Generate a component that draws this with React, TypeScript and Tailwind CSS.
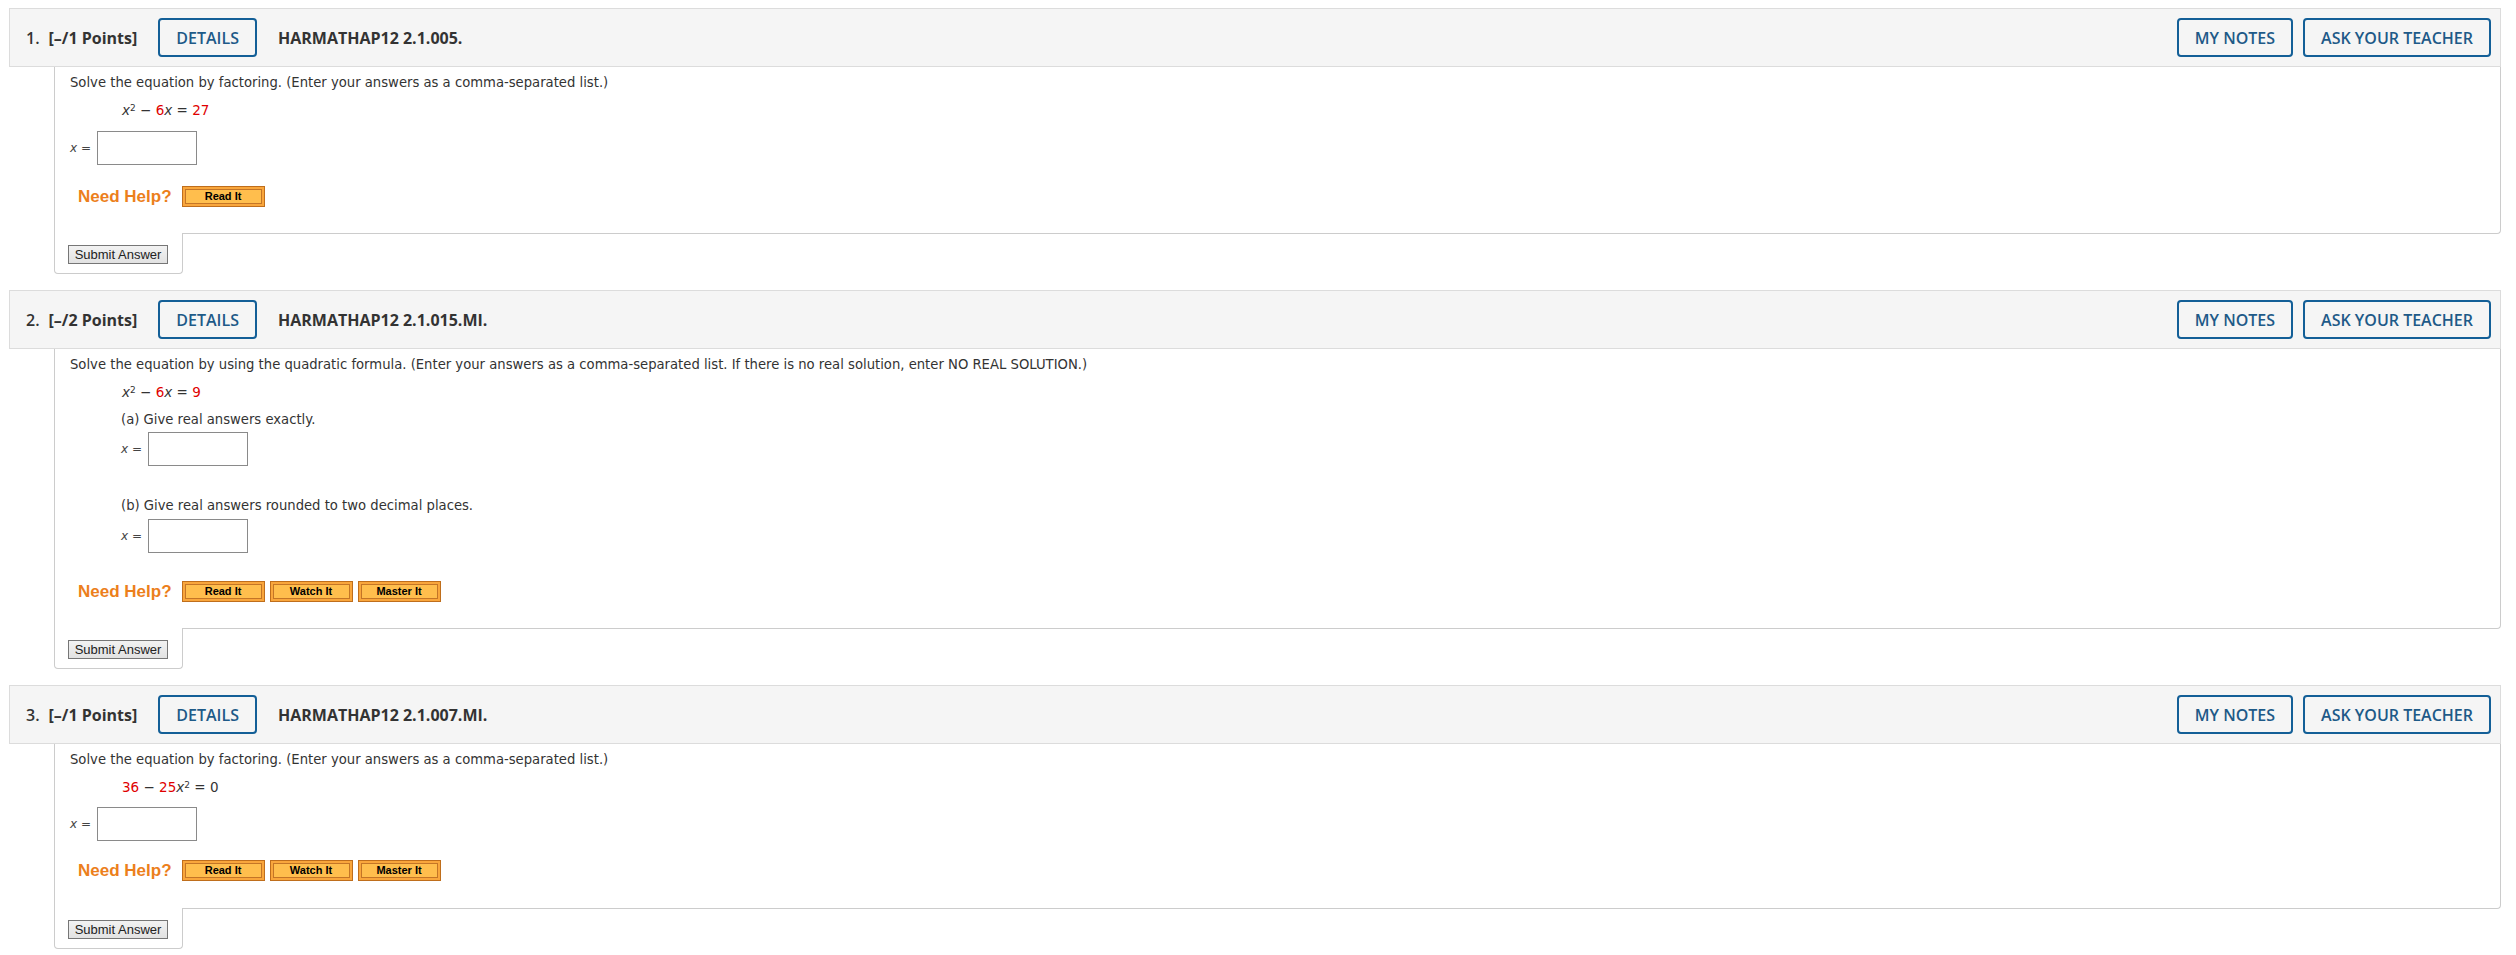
import React from "react";

const OS = "[font-family:'Open_Sans',sans-serif]";
const VD = "font-['DejaVu_Sans',Verdana,sans-serif]";
const AR = "[font-family:'Liberation_Sans',Arial,sans-serif]";

function OutlineBtn({ children }: { children: React.ReactNode }) {
  return (
    <button
      className={`${OS} h-[39px] px-4 border-2 border-[#135f97] rounded-[4px] text-[16px] font-semibold text-[#1e5a88] bg-transparent leading-none uppercase`}
    >
      {children}
    </button>
  );
}

function Header({ num, points, code }: { num: string; points: string; code: string }) {
  return (
    <div className={`${OS} h-[59px] border border-[#dcdcdc] bg-[#f5f5f5] flex items-center pl-4 pr-[9px] text-[#333333]`}>
      <span className="text-[16px] font-semibold">{num}</span>
      <span className="ml-[9px] text-[16px] font-bold">{points}</span>
      <span className="ml-[21px]">
        <OutlineBtn>Details</OutlineBtn>
      </span>
      <span className="ml-[21px] text-[16px] font-bold">{code}</span>
      <div className="ml-auto flex gap-[10px]">
        <OutlineBtn>My Notes</OutlineBtn>
        <OutlineBtn>Ask Your Teacher</OutlineBtn>
      </div>
    </div>
  );
}

function OrangeBtn({ label }: { label: string }) {
  return (
    <span className="w-[83px] h-[21px] border border-[#bf6e1c] bg-[#f9a63c] p-[2px] flex">
      <span
        className={`${AR} flex-1 border border-[#c47526] bg-[#ffbe4d] flex items-center justify-center text-[11px] font-bold text-black leading-none`}
      >
        {label}
      </span>
    </span>
  );
}

function NeedHelp({ labels, mt }: { labels: string[]; mt: string }) {
  return (
    <div className={`flex items-center h-[21px] ml-[8px] ${mt}`}>
      <span className={`${AR} font-bold text-[17px] text-[#ec7f1c] leading-none`}>Need Help?</span>
      <div className="flex gap-[5px] ml-[10px]">
        {labels.map((l) => (
          <OrangeBtn key={l} label={l} />
        ))}
      </div>
    </div>
  );
}

function AnswerRow({ mt, indent }: { mt: string; indent?: boolean }) {
  return (
    <div className={`flex items-center ${mt} ${indent ? "ml-[51px]" : ""}`}>
      <span className="w-[27px] text-[12px] text-[#444444]">
        <i>x</i> =
      </span>
      <input type="text" className="w-[100px] h-[34px] border border-[#8a8a8a] bg-white outline-none" />
    </div>
  );
}

function SubmitBox() {
  return (
    <div className="-mt-px ml-[45px] w-[129px] border-x border-b border-[#cccccc] rounded-b-[4px] bg-white pl-[13px] pt-[12px] pb-[9px]">
      <button
        className={`${AR} w-[100px] h-[19px] border border-[#767676] bg-gradient-to-b from-[#f2f2f2] to-[#e2e2e2] text-[13px] text-[#222222] leading-none flex items-center justify-center`}
      >
        Submit Answer
      </button>
    </div>
  );
}

const R = "text-[#e00000]";

export default function App() {
  return (
    <div className={`w-[2516px] min-h-[955px] bg-white pl-[9px] pr-[15px] pt-[8px] ${VD}`}>
      {/* Question 1 */}
      <div>
        <Header num="1." points="[–/1 Points]" code="HARMATHAP12 2.1.005." />
        <div className="ml-[45px] border-x border-b border-[#cccccc] rounded-br-[4px] pl-[15px] pt-[8px] pb-[26px] text-[#333333]">
          <div className="text-[13.2px] leading-[16px]">
            Solve the equation by factoring. (Enter your answers as a comma-separated list.)
          </div>
          <div className="mt-[10px] ml-[52px] text-[13.5px] leading-[18px]">
            <i>x</i>
            <sup className="text-[9px]">2</sup> − <span className={R}>6</span>
            <i>x</i> = <span className={R}>27</span>
          </div>
          <AnswerRow mt="mt-[12px]" />
          <NeedHelp labels={["Read It"]} mt="mt-[21px]" />
        </div>
        <SubmitBox />
      </div>

      {/* Question 2 */}
      <div className="mt-[16px]">
        <Header num="2." points="[–/2 Points]" code="HARMATHAP12 2.1.015.MI." />
        <div className="ml-[45px] border-x border-b border-[#cccccc] rounded-br-[4px] pl-[15px] pt-[8px] pb-[26px] text-[#333333]">
          <div className="text-[13.2px] leading-[16px]">
            Solve the equation by using the quadratic formula. (Enter your answers as a comma-separated list. If there is
            no real solution, enter NO REAL SOLUTION.)
          </div>
          <div className="mt-[10px] ml-[52px] text-[13.5px] leading-[18px]">
            <i>x</i>
            <sup className="text-[9px]">2</sup> − <span className={R}>6</span>
            <i>x</i> = <span className={R}>9</span>
          </div>
          <div className="mt-[11px] ml-[51px] text-[13.2px] leading-[16px]">(a) Give real answers exactly.</div>
          <AnswerRow mt="mt-[4px]" indent />
          <div className="mt-[32px] ml-[51px] text-[13.2px] leading-[16px]">
            (b) Give real answers rounded to two decimal places.
          </div>
          <AnswerRow mt="mt-[5px]" indent />
          <NeedHelp labels={["Read It", "Watch It", "Master It"]} mt="mt-[28px]" />
        </div>
        <SubmitBox />
      </div>

      {/* Question 3 */}
      <div className="mt-[16px]">
        <Header num="3." points="[–/1 Points]" code="HARMATHAP12 2.1.007.MI." />
        <div className="ml-[45px] border-x border-b border-[#cccccc] rounded-br-[4px] pl-[15px] pt-[8px] pb-[27px] text-[#333333]">
          <div className="text-[13.2px] leading-[16px]">
            Solve the equation by factoring. (Enter your answers as a comma-separated list.)
          </div>
          <div className="mt-[10px] ml-[52px] text-[13.5px] leading-[18px]">
            <span className={R}>36</span> − <span className={R}>25</span>
            <i>x</i>
            <sup className="text-[9px]">2</sup> = 0
          </div>
          <AnswerRow mt="mt-[11px]" />
          <NeedHelp labels={["Read It", "Watch It", "Master It"]} mt="mt-[19px]" />
        </div>
        <SubmitBox />
      </div>
    </div>
  );
}
